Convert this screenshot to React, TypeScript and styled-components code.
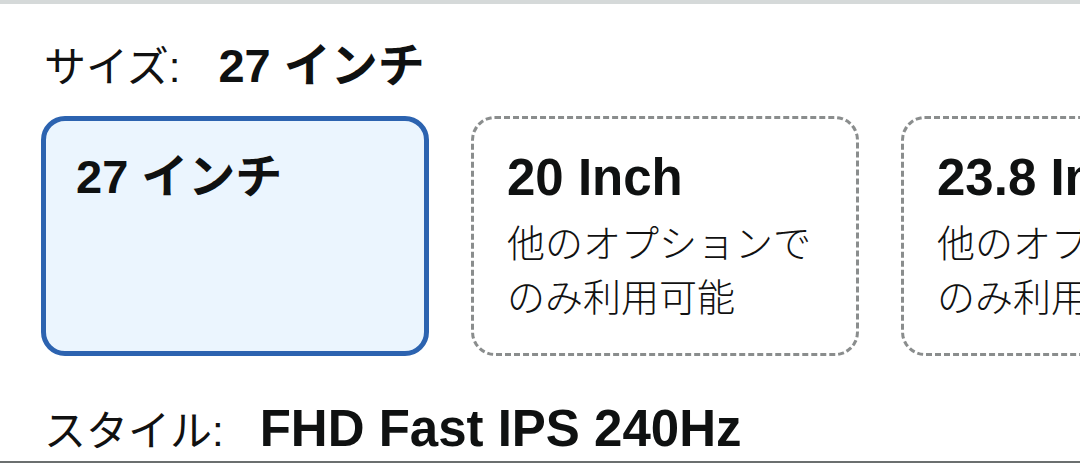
import React from "react";
import styled, { createGlobalStyle } from "styled-components";

const GlobalStyle = createGlobalStyle`
  html, body {
    margin: 0;
    padding: 0;
    background: #ffffff;
  }
  body {
    font-family: "Liberation Sans", Arial, "Noto Sans CJK JP", sans-serif;
    color: #0f1111;
  }
`;

const Page = styled.div`
  box-sizing: border-box;
  width: 1080px;
  height: 463px;
  overflow: hidden;
  border-top: 4px solid #d5d9d9;
  border-bottom: 2px solid #6b6f6f;
  padding: 0 0 0 44px;
  display: flex;
  flex-direction: column;
`;

const VariationRow = styled.div<{ $top: number; $gap: number }>`
  display: flex;
  align-items: baseline;
  gap: ${(p) => p.$gap}px;
  margin-top: ${(p) => p.$top}px;
  line-height: 1.2;
  white-space: nowrap;
`;

const Label = styled.span`
  font-size: 42px;
  font-weight: 400;
  color: #111;
`;

const Value = styled.span<{ $size: number }>`
  font-size: ${(p) => p.$size}px;
  font-weight: 700;
  color: #0f1111;
`;

const Swatches = styled.div`
  display: flex;
  gap: 42px;
  margin-top: 22px;
  margin-left: -3px;
`;

const Swatch = styled.div<{ $selected?: boolean }>`
  box-sizing: border-box;
  flex: 0 0 388px;
  min-width: 0;
  height: 240px;
  border-radius: 24px;
  padding: ${(p) => (p.$selected ? "27px 30px" : "30px 33px")};
  background: ${(p) => (p.$selected ? "#ebf5fe" : "#ffffff")};
  border: ${(p) => (p.$selected ? "5px solid #2c63b0" : "3px dashed #8a8d8d")};
  display: flex;
  flex-direction: column;
  gap: 8px;
`;

const SwatchTitle = styled.div<{ $size: number }>`
  font-size: ${(p) => p.$size}px;
  font-weight: 700;
  line-height: 57px;
  white-space: nowrap;
  color: #0f1111;
`;

const SwatchNote = styled.div`
  font-family: "Noto Sans CJK JP", sans-serif;
  font-size: 38px;
  font-weight: 300;
  line-height: 54px;
  color: #111;
  overflow-wrap: anywhere;
`;

type SizeOption = {
  title: string;
  size: number;
  note?: string;
  selected?: boolean;
};

const sizes: SizeOption[] = [
  { title: "27 インチ", size: 47, selected: true },
  { title: "20 Inch", size: 51, note: "他のオプションでのみ利用可能" },
  { title: "23.8 Inch", size: 51, note: "他のオプションでのみ利用可能" },
];

export default function App() {
  return (
    <>
      <GlobalStyle />
      <Page>
        <VariationRow $top={34} $gap={38}>
          <Label>サイズ:</Label>
          <Value $size={47}>27 インチ</Value>
        </VariationRow>
        <Swatches>
          {sizes.map((s) => (
            <Swatch key={s.title} $selected={s.selected}>
              <SwatchTitle $size={s.size}>{s.title}</SwatchTitle>
              {s.note && <SwatchNote>{s.note}</SwatchNote>}
            </Swatch>
          ))}
        </Swatches>
        <VariationRow $top={42} $gap={36}>
          <Label>スタイル:</Label>
          <Value $size={51}>FHD Fast IPS 240Hz</Value>
        </VariationRow>
      </Page>
    </>
  );
}
